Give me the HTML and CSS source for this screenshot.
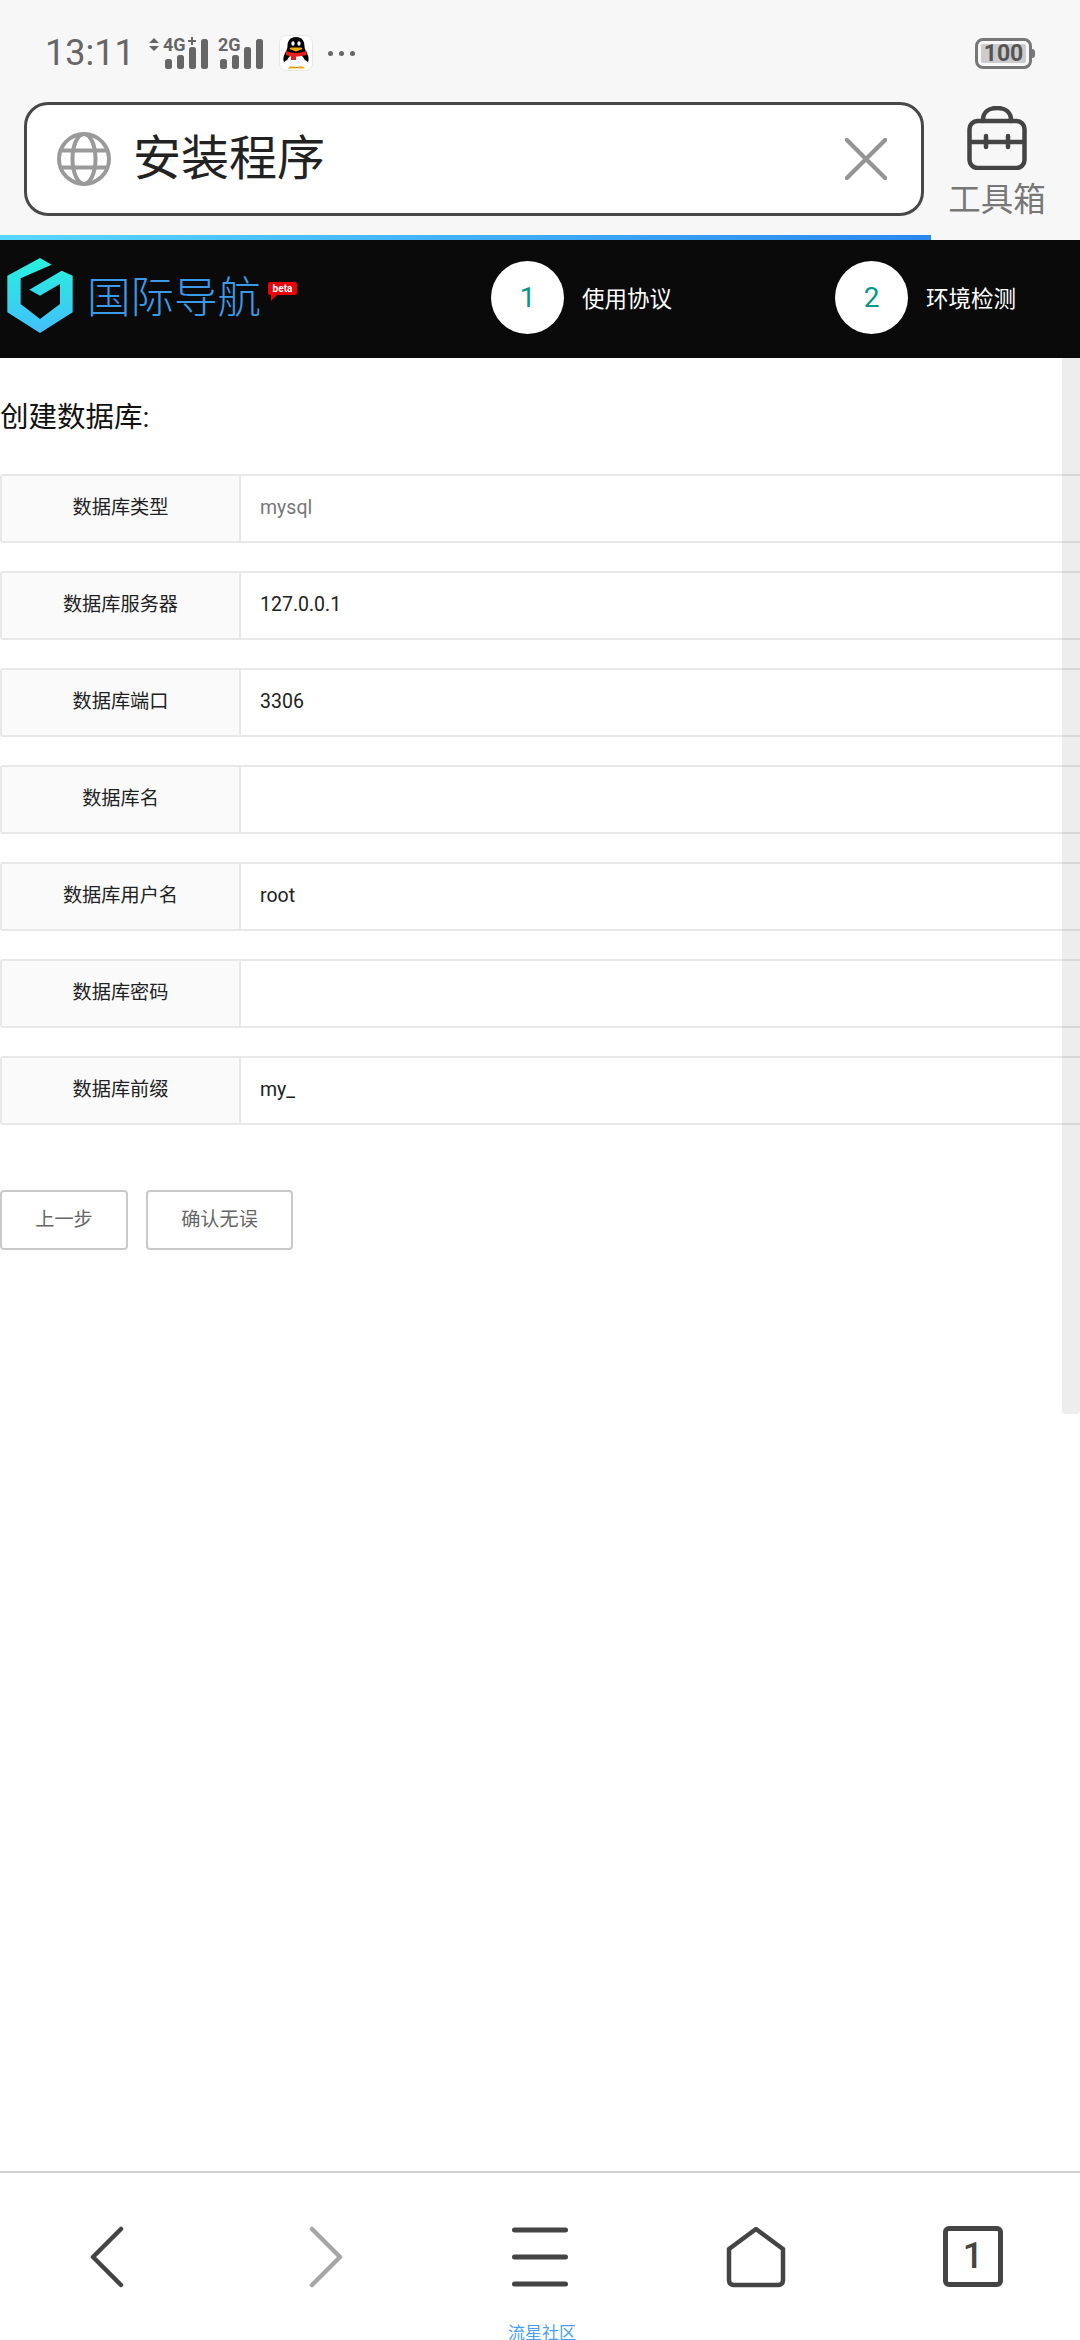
FILE: index.html
```html
<!DOCTYPE html>
<html lang="zh">
<head>
<meta charset="utf-8">
<title>安装程序</title>
<link rel="stylesheet" href="styles.css">
</head>
<body>
<div class="screen">
  <header class="chrome">
    <div class="status">
      <span class="time">13:11</span>
      <svg class="sig" width="64" height="36" viewBox="0 0 64 36">
        <path class="sf" d="M3 8l5-5 5 5zM3 11l5 5 5-5z"/>
        <text x="17" y="16" class="sigt">4G</text>
        <path class="sf" d="M42 5h3V2h2v3h3v2h-3v3h-2V7h-3z" />
        <rect class="sf" x="19" y="24" width="7" height="10" rx="2.5"/>
        <rect class="sf" x="31" y="20" width="7" height="14" rx="2.5"/>
        <rect class="sf" x="43" y="12" width="7" height="22" rx="2.5"/>
        <rect class="sf" x="55" y="4" width="7" height="30" rx="2.5"/>
      </svg>
      <svg class="sig sig2" width="46" height="36" viewBox="0 0 46 36">
        <text x="1" y="16" class="sigt">2G</text>
        <rect class="sf" x="3" y="24" width="7" height="10" rx="2.5"/>
        <rect class="sf" x="15" y="20" width="7" height="14" rx="2.5"/>
        <rect class="sf" x="27" y="12" width="7" height="22" rx="2.5"/>
        <rect class="sf" x="39" y="4" width="7" height="30" rx="2.5"/>
      </svg>
      <svg class="qq" width="34" height="36" viewBox="0 0 34 36">
        <rect x=".5" y=".5" width="33" height="35" rx="7" fill="#fff" stroke="#e6e6e6"/>
        <path d="M17 2c-6 0-8.500 4-8.500 9 0 3-1 4-2 6-1.500 3-3 7-1.500 10l3-2c1 5 4 8 9 8s8-3 9-8l3 2c1.500-3 0-7-1.500-10-1-2-2-3-2-6 0-5-2.500-9-8.500-9z" fill="#000"/>
        <path d="M11 21h12c3 3 4 6 3 8-1 2-4 3.500-9 3.500s-8-1.500-9-3.500c-1-2 0-5 3-8z" fill="#fff"/>
        <ellipse cx="14" cy="8.500" rx="1.600" ry="2.200" fill="#fff"/><ellipse cx="20" cy="8.500" rx="1.600" ry="2.200" fill="#fff"/>
        <path d="M11.500 12.500h11l1 1.500-6.500 2.500L10.500 14z" fill="#f5a800"/>
        <path d="M7 16c6 2.500 14 2.500 20.500 0v4l-8 1.500H17V25h-5v-3.500L7 20z" fill="#e8201c"/>
        <path d="M9 33.500l2-2h5l1 2zM18 33.500l1-2h5l2 2z" fill="#f5a800"/>
      </svg>
      <span class="dots"><i></i><i></i><i></i></span>
      <span class="battery"><span class="batt-fill">100</span></span>
    </div>
    <div class="addr-row">
      <div class="addr">
        <svg class="globe" width="54" height="54" viewBox="0 0 54 54" fill="none" stroke="#9a9a9a" stroke-width="4">
          <circle cx="27" cy="27" r="25"/>
          <ellipse cx="27" cy="27" rx="11.500" ry="25"/>
          <path d="M5 18.500h44M5 35.500h44"/>
        </svg>
        <span class="addr-text">安装程序</span>
        <svg class="clear" width="42" height="42" viewBox="0 0 44 44" fill="none" stroke="#949494" stroke-width="4.500" stroke-linecap="round">
          <path d="M2 2l40 40M42 2L2 42"/>
        </svg>
      </div>
      <div class="tools">
        <svg width="60" height="64" viewBox="0 0 60 64" fill="none" stroke="#444" stroke-width="4.500" stroke-linecap="round">
          <path d="M16 15v-1C16 6 22 2 30 2s14 4 14 12v1"/>
          <rect x="2.500" y="15" width="55" height="47" rx="8"/>
          <path d="M3 36h54M19 30v11M41 30v11"/>
        </svg>
        <span class="tools-label">工具箱</span>
      </div>
    </div>
    <div class="progress"></div>
  </header>

  <nav class="site-head">
    <div class="brand">
      <svg class="logo" width="66" height="75" viewBox="22 52 196 225">
        <defs><linearGradient id="lg" x1="0" y1="0" x2="0" y2="1"><stop offset="0" stop-color="#28f2dc"/><stop offset="1" stop-color="#42befc"/></linearGradient></defs>
        <path fill="url(#lg)" d="M120 52l35 20-93 41v77l58 45 60-45v-60l-60 35-32-18 97-57 33 15v110l-98 62-98-62V105z"/>
      </svg>
      <span class="brand-name">国际导航</span>
      <span class="beta">beta</span>
    </div>
    <div class="step step-a"><span class="step-num">1</span><span class="step-label">使用协议</span></div>
    <div class="step"><span class="step-num">2</span><span class="step-label">环境检测</span></div>
  </nav>

  <main class="content">
    <h1 class="title">创建数据库:</h1>
    <form class="form">
      <div class="row"><label class="row-label">数据库类型</label><span class="row-value muted">mysql</span></div>
      <div class="row"><label class="row-label">数据库服务器</label><span class="row-value">127.0.0.1</span></div>
      <div class="row"><label class="row-label">数据库端口</label><span class="row-value">3306</span></div>
      <div class="row"><label class="row-label">数据库名</label><span class="row-value"></span></div>
      <div class="row"><label class="row-label">数据库用户名</label><span class="row-value">root</span></div>
      <div class="row"><label class="row-label">数据库密码</label><span class="row-value"></span></div>
      <div class="row"><label class="row-label">数据库前缀</label><span class="row-value">my_</span></div>
    </form>
    <div class="actions">
      <span class="btn btn-prev">上一步</span>
      <span class="btn btn-ok">确认无误</span>
    </div>
    <div class="scrollbar"></div>
  </main>

  <footer class="toolbar">
    <svg class="ic ic-back" width="34" height="62" viewBox="0 0 34 62" fill="none" stroke="#444" stroke-width="4.500" stroke-linecap="round" stroke-linejoin="round"><path d="M31 3L3 31l28 28"/></svg>
    <svg class="ic ic-fwd" width="34" height="62" viewBox="0 0 34 62" fill="none" stroke="#a6a6a6" stroke-width="4.500" stroke-linecap="round" stroke-linejoin="round"><path d="M3 3l28 28L3 59"/></svg>
    <svg class="ic ic-menu" width="56" height="60" viewBox="0 0 56 60" fill="none" stroke="#444" stroke-width="5" stroke-linecap="round"><path d="M2.500 3h51M2.500 30h51M2.500 57h51"/></svg>
    <svg class="ic ic-home" width="60" height="62" viewBox="0 0 60 62" fill="none" stroke="#444" stroke-width="4.500" stroke-linejoin="round"><path d="M30 3L3 23v31q0 5 5 5h44q5 0 5-5V23z"/></svg>
    <div class="ic ic-tabs">1</div>
    <span class="promo">流星社区</span>
  </footer>
</div>
</body>
</html>
```
FILE: styles.css
```css
* { box-sizing: border-box; }
html, body { margin: 0; padding: 0; }
body { width: 1080px; height: 2340px; overflow: hidden; background: #fff; font-family: Roboto, "Noto Sans CJK SC", sans-serif; }
.screen { width: 1080px; height: 2340px; display: flex; flex-direction: column; overflow: hidden; }

.chrome { height: 240px; background: #f7f7f7; display: flex; flex-direction: column; flex: none; }
.status { height: 102px; display: flex; align-items: center; padding: 4px 45px 0 45px; color: #666; flex: none; }
.time { font-size: 36px; width: 100px; }
.sig { margin-left: 1px; }
.sig2 { margin-left: 7px; }
.sf { fill: #666; }
.sigt { font: bold 18px Roboto, sans-serif; fill: #666; }
.qq { margin-left: 16px; }
.dots { display: flex; gap: 6px; margin-left: 15px; }
.dots i { display: block; width: 5px; height: 5px; border-radius: 50%; background: #666; }
.battery { margin-left: auto; margin-right: 3px; width: 57px; height: 31px; border: 3px solid #777; border-radius: 8px; padding: 3px; position: relative; display: flex; }
.battery::after { content: ""; position: absolute; right: -6px; top: 8px; width: 3px; height: 9px; background: #777; border-radius: 0 3px 3px 0; }
.batt-fill { flex: 1; background: #ccc; border-radius: 2px; font-size: 23px; line-height: 19px; font-weight: 700; color: #555; text-align: center; }

.addr-row { display: flex; flex: none; height: 133px; padding-left: 24px; }
.addr { width: 900px; height: 114px; background: #fff; border: 3px solid #484848; border-radius: 24px; display: flex; align-items: center; padding: 0 34px 0 30px; }
.globe { flex: none; }
.addr-text { font-size: 48px; color: #222; margin-left: 22px; line-height: 1; }
.clear { margin-left: auto; }
.tools { width: 146px; display: flex; flex-direction: column; align-items: center; margin-top: 4px; }
.tools-label { font-size: 32.500px; line-height: 38px; color: #777; margin-top: 11px; white-space: nowrap; }
.progress { height: 5px; width: 931px; flex: none; background: linear-gradient(90deg, #58d8fa, #2a88f0); }

.site-head { height: 118px; background: #0a0a0a; display: flex; align-items: center; flex: none; color: #fff; }
.brand { width: 491px; flex: none; display: flex; align-items: center; padding-left: 7px; position: relative; }
.logo { flex: none; margin-top: -8px; }
.brand-name { font-size: 43.500px; font-weight: 300; color: #3a9ae8; margin-left: 14px; line-height: 1; }
.beta { position: absolute; left: 268px; top: 16px; width: 29px; height: 13px; background: #e8000a; border-radius: 2px; font-size: 10px; line-height: 13px; font-weight: 700; text-align: center; color: #fff; }
.beta::after { content: ""; position: absolute; left: 3px; top: 13px; border: 3px solid transparent; border-top-color: #e8000a; border-left-color: #e8000a; }
.step { display: flex; align-items: center; width: 344px; flex: none; margin-top: -3px; }
.step-num { width: 73px; height: 73px; border-radius: 50%; background: #fff; color: #009688; font-size: 28px; line-height: 73px; text-align: center; flex: none; }
.step-label { font-size: 22.500px; margin-left: 18px; color: #fff; position: relative; top: -1px; }

.content { flex: 1; position: relative; background: #fff; overflow: hidden; }
.title { margin: 0; font-size: 28.500px; font-weight: 400; line-height: 40px; color: #111; padding-top: 40px; }
.form { margin-top: 36px; width: 1100px; display: flex; flex-direction: column; gap: 28px; }
.row { height: 69px; display: flex; border: 2px solid #e8e8e8; border-radius: 3px; font-size: 19.200px; color: #222; flex: none; }
.row-label { width: 239px; flex: none; background: #fafafa; border-right: 2px solid #e8e8e8; text-align: center; line-height: 64px; }
.row-value { padding-left: 19px; line-height: 64px; flex: 1; font-size: 19.500px; }
.muted { color: #777; }
.actions { display: flex; gap: 18px; margin-top: 65px; }
.btn { height: 60px; border: 2px solid #c9c9c9; border-radius: 4px; font-size: 19.200px; line-height: 55px; color: #666; text-align: center; background: #fff; flex: none; }
.btn-prev { width: 128px; }
.btn-ok { width: 147px; }
.scrollbar { position: absolute; right: 0; top: 0; width: 18px; height: 1056px; background: rgba(0,0,0,.07); border-radius: 0 0 4px 4px; }

.toolbar { height: 169px; flex: none; border-top: 2px solid #d0d0d0; background: #fff; display: flex; position: relative; padding-top: 53px; align-items: flex-start; }
.ic { flex: none; }
.ic-back { margin-left: 90px; }
.ic-fwd { margin-left: 185px; }
.ic-menu { margin-left: 169px; margin-top: 1px; }
.ic-home { margin-left: 158px; }
.ic-tabs { margin-left: 157px; width: 60px; height: 61px; border: 5px solid #444; border-radius: 6px; font-size: 36px; line-height: 50px; font-weight: 500; color: #444; text-align: center; }
.promo { position: absolute; left: 508px; top: 150px; font-size: 17px; line-height: 20px; color: #4a9ff5; }
```
